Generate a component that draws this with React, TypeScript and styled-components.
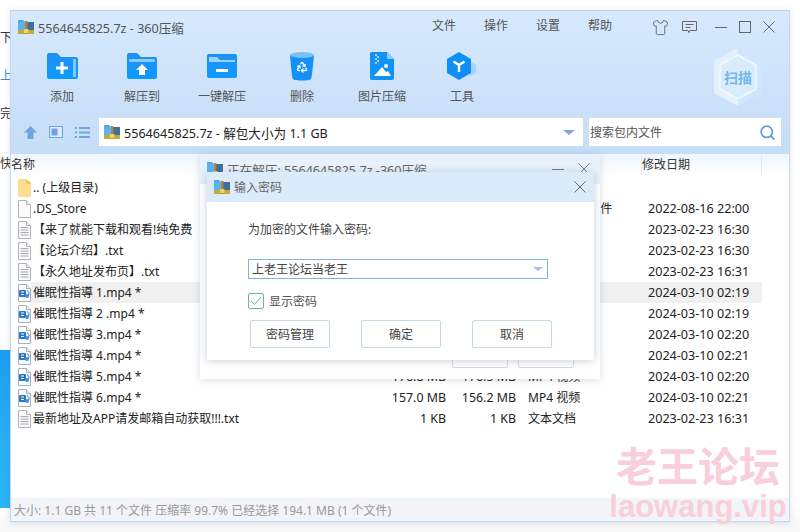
import React from 'react';
import styled, { createGlobalStyle } from 'styled-components';
import { Recycle, Search, Shirt } from 'lucide-react';

const GlobalStyle = createGlobalStyle`
  html, body { margin: 0; padding: 0; background: #fff; }
  body {
    width: 800px;
    height: 532px;
    overflow: hidden;
    font-family: "Noto Sans", "Noto Sans CJK SC", sans-serif;
    font-size: 12px;
    color: #333;
  }
`;

const Desktop = styled.div`
  position: relative;
  box-sizing: border-box;
  width: 800px;
  height: 532px;
  padding: 10px 10px 10px 10px;
  background: linear-gradient(#fff 0, #fff 505px, #f8f8f8 522px);
  overflow: hidden;
`;

// pieces of the page behind the window
const BackText = styled.span<{ $top: number; $blue?: boolean }>`
  position: absolute;
  left: 0;
  top: ${(p) => p.$top}px;
  font-size: 12px;
  line-height: 16px;
  color: ${(p) => (p.$blue ? '#2f8fe8' : '#333')};
`;

const BackAd = styled.div`
  position: absolute;
  left: 0;
  top: 350px;
  width: 10px;
  height: 158px;
  background: linear-gradient(#1b9cf0, #2ab0f6 60%, #28b4f8);
`;

const Window = styled.div`
  position: relative;
  box-sizing: border-box;
  width: 780px;
  height: 512px;
  display: flex;
  flex-direction: column;
  background: #fff;
  border: 1px solid #c3d9f1;
  border-top-color: #bcd5f0;
  box-shadow: 0 1px 6px rgba(90, 110, 140, 0.18);
`;

const Header = styled.div`
  height: 143px;
  flex: none;
  display: flex;
  flex-direction: column;
  background: linear-gradient(#d6e9fd, #c6ddf7);
`;

const TitleBar = styled.div`
  height: 32px;
  flex: none;
  display: flex;
  align-items: center;
  padding: 0 8px 0 7px;
`;

const TitleText = styled.span`
  margin-left: 4px;
  font-size: 12.6px;
  color: #555;
`;

const MenuGroup = styled.div`
  margin-left: auto;
  display: flex;
  gap: 28px;
  margin-right: 34px;
`;

const MenuItem = styled.span`
  font-size: 12px;
  color: #555;
  margin-top: -4px;
`;

const WinControls = styled.div`
  display: flex;
  align-items: center;
  color: #666;
`;

const ControlBox = styled.span<{ $width: number }>`
  width: ${(p) => p.$width}px;
  display: flex;
  justify-content: center;
  align-items: center;
`;

const Toolbar = styled.div`
  height: 75px;
  flex: none;
  display: flex;
  padding-left: 11px;
  position: relative;
`;

const ToolItem = styled.div`
  width: 80px;
  display: flex;
  flex-direction: column;
  align-items: center;
`;

const ToolIcon = styled.div`
  height: 30px;
  margin-top: 8px;
  display: flex;
  align-items: center;
  justify-content: center;
`;

const ToolLabel = styled.span`
  margin-top: 8px;
  font-size: 12px;
  line-height: 16px;
  color: #555;
`;

const ScanBadge = styled.div`
  margin: 5px 27px 0 auto;
  width: 48px;
  height: 58px;
  display: grid;
  place-items: center;
  & > * { grid-area: 1 / 1; }
`;

const ScanText = styled.span`
  font-size: 14px;
  font-weight: 700;
  color: #74b6ee;
`;

const AddressRow = styled.div`
  height: 28px;
  flex: none;
  display: flex;
  align-items: center;
  padding-left: 13px;
`;

const NavIcons = styled.div`
  width: 75px;
  display: flex;
  align-items: center;
  gap: 12px;
`;

const AddressBox = styled.div`
  width: 484px;
  height: 28px;
  display: flex;
  align-items: center;
  padding: 0 8px 0 5px;
  box-sizing: border-box;
  background: #fff;
`;

const AddressText = styled.span`
  margin-left: 4px;
  font-size: 12.6px;
  color: #222;
`;

const DropArrow = styled.span<{ $size: number; $color: string }>`
  margin-left: auto;
  width: 0;
  height: 0;
  border-left: ${(p) => p.$size}px solid transparent;
  border-right: ${(p) => p.$size}px solid transparent;
  border-top: ${(p) => p.$size - 1}px solid ${(p) => p.$color};
`;

const SearchBox = styled.div`
  margin-left: 6px;
  width: 192px;
  height: 28px;
  display: flex;
  align-items: center;
  justify-content: space-between;
  padding: 0 5px 0 1px;
  box-sizing: border-box;
  background: #fff;
  color: #555;
`;

const ListHeader = styled.div`
  height: 21px;
  flex: none;
  display: flex;
  align-items: center;
  background: linear-gradient(#eef5fd, #fff);
`;

const HeaderCell = styled.span<{ $width: number; $divider?: boolean }>`
  width: ${(p) => p.$width}px;
  box-sizing: border-box;
  height: 21px;
  line-height: 21px;
  font-size: 12px;
  color: #333;
  border-right: ${(p) => (p.$divider ? '1px solid #e3e9f1' : 'none')};
`;

const ListBody = styled.div`
  flex: 1;
  padding-top: 2px;
`;

const Row = styled.div`
  height: 21px;
  display: flex;
  align-items: center;
  padding-left: 6px;
`;

const RowIconBox = styled.span`
  width: 14px;
  flex: none;
  display: flex;
  justify-content: center;
`;

const RowBody = styled.div<{ $selected?: boolean }>`
  flex: none;
  width: 731px;
  height: 21px;
  display: grid;
  grid-template-columns: 355px 60px 70px 126px 120px;
  align-items: center;
  line-height: 21px;
  padding-left: 0;
  background: ${(p) => (p.$selected ? '#f0f0f0' : 'transparent')};
  color: #222;
`;

const NameCell = styled.span`
  padding-left: 2px;
  white-space: nowrap;
  overflow: hidden;
  font-size: 12px;
`;

const SizeCell = styled.span`
  text-align: right;
  font-size: 12.4px;
`;

const TypeCell = styled.span`
  padding-left: 12px;
  font-size: 12px;
  white-space: nowrap;
`;

const DateCell = styled.span`
  padding-left: 6px;
  font-size: 12.6px;
  white-space: nowrap;
`;

const StatusBar = styled.div`
  height: 23px;
  flex: none;
  display: flex;
  align-items: center;
  padding-left: 3px;
  background: #f2f4f7;
  font-size: 12px;
  color: #9a9a9a;
`;

// dialog behind the password prompt
const ProgressDialog = styled.div`
  position: absolute;
  left: 200px;
  top: 154px;
  width: 400px;
  height: 225px;
  display: flex;
  flex-direction: column;
  background: #fff;
  box-shadow: 0 1px 8px rgba(80, 100, 130, 0.22);
`;

const ProgressHead = styled.div`
  height: 30px;
  flex: none;
  display: flex;
  align-items: center;
  padding: 0 10px 0 7px;
  background: #e8f2fc;
  color: #666;
`;

const ProgressTitle = styled.span`
  margin-left: 4px;
  font-size: 12.6px;
`;

const ProgressControls = styled.div`
  margin-left: auto;
  display: flex;
  gap: 14px;
  align-items: center;
`;

const ProgressFoot = styled.div`
  margin-top: auto;
  margin-bottom: 11px;
  padding-left: 252px;
  display: flex;
  gap: 10px;
`;

const GhostButton = styled.div`
  width: 56px;
  height: 26px;
  box-sizing: border-box;
  border: 1px solid #d4dde6;
  border-radius: 2px;
  background: #fff;
`;

const PasswordDialog = styled.div`
  position: absolute;
  left: 207px;
  top: 172px;
  width: 387px;
  height: 188px;
  display: flex;
  flex-direction: column;
  background: #fff;
  box-shadow: 0 1px 8px rgba(80, 100, 130, 0.3);
`;

const DialogHead = styled.div`
  height: 30px;
  flex: none;
  display: flex;
  align-items: center;
  justify-content: space-between;
  padding: 0 8px 0 7px;
  background: #dcebfa;
  color: #666;
`;

const DialogTitle = styled.span`
  display: flex;
  align-items: center;
  gap: 4px;
  font-size: 12px;
  color: #666;
`;

const DialogBody = styled.div`
  display: flex;
  flex-direction: column;
  padding: 20px 0 0 41px;
`;

const PromptLabel = styled.span`
  font-size: 12px;
  line-height: 16px;
  color: #444;
`;

const Combo = styled.div`
  margin-top: 21px;
  box-sizing: border-box;
  width: 300px;
  height: 20px;
  display: flex;
  align-items: center;
  padding: 0 4px 0 3px;
  border: 1px solid #82b3d9;
  font-size: 12px;
  color: #444;
`;

const CheckRow = styled.div`
  margin-top: 13px;
  display: flex;
  align-items: center;
  gap: 5px;
  color: #555;
`;

const CheckBox = styled.span`
  width: 16px;
  height: 16px;
  box-sizing: border-box;
  display: flex;
  align-items: center;
  justify-content: center;
  border: 1px solid #5dbd8f;
  border-radius: 2px;
`;

const ButtonRow = styled.div`
  margin: 10px 0 0 2px;
  display: flex;
  gap: 31px;
`;

const DialogButton = styled.div`
  box-sizing: border-box;
  width: 80px;
  height: 28px;
  display: flex;
  align-items: center;
  justify-content: center;
  border: 1px solid #c4d7e6;
  border-radius: 2px;
  font-size: 12px;
  color: #444;
  background: #fff;
`;

const Watermark = styled.div`
  position: absolute;
  left: 613px;
  top: 441px;
  width: 170px;
  display: flex;
  flex-direction: column;
  align-items: center;
  pointer-events: none;
  color: #f9cfd9;
  font-weight: 700;
`;

const WatermarkCn = styled.span`
  font-size: 41px;
  line-height: 50px;
  letter-spacing: 0;
  white-space: nowrap;
`;

const WatermarkEn = styled.span`
  font-size: 31px;
  line-height: 32px;
  font-family: "Liberation Sans", sans-serif;
  white-space: nowrap;
`;

const ArchiveIcon = () => (
  <svg width="16" height="14" viewBox="0 0 16 14">
    <path d="M0 1a1 1 0 0 1 1-1h4l2 2v8H0z" fill="#4ea6e8" />
    <rect x="0" y="2" width="8" height="8" fill="#5cb2ee" />
    <rect x="9" y="2" width="7" height="8" fill="#3f6f9f" />
    <rect x="0" y="10" width="16" height="4" fill="#c2ac3a" />
    <rect x="7" y="1" width="2.4" height="13" fill="#b9852c" />
    <rect x="6" y="9" width="4.4" height="4" fill="#f1cf6a" />
  </svg>
);

const AddIcon = () => (
  <svg width="31" height="26" viewBox="0 0 31 26">
    <defs>
      <linearGradient id="fold" x1="0" y1="0" x2="0" y2="1">
        <stop offset="0" stopColor="#1f8ff6" />
        <stop offset="1" stopColor="#0d9bff" />
      </linearGradient>
    </defs>
    <path d="M2 0h8l4 4h15a2 2 0 0 1 2 2v18a2 2 0 0 1-2 2H2a2 2 0 0 1-2-2V2a2 2 0 0 1 2-2z" fill="url(#fold)" />
    <rect x="26" y="6" width="3" height="18" fill="#85c6fb" />
    <rect x="9" y="13.5" width="12" height="3" fill="#fff" />
    <rect x="13.5" y="9" width="3" height="12" fill="#fff" />
  </svg>
);

const ExtractToIcon = () => (
  <svg width="30" height="26" viewBox="0 0 30 26">
    <path d="M2 0h8l4 4h14a2 2 0 0 1 2 2v18a2 2 0 0 1-2 2H2a2 2 0 0 1-2-2V2a2 2 0 0 1 2-2z" fill="url(#fold)" />
    <rect x="2" y="6" width="26" height="3" rx="1" fill="#8accfd" />
    <path d="M15 11l6 6h-3v5h-6v-5H9z" fill="#fff" />
  </svg>
);

const OneKeyIcon = () => (
  <svg width="30" height="24" viewBox="0 0 30 24">
    <path d="M2 0h26a2 2 0 0 1 2 2v20a2 2 0 0 1-2 2H2a2 2 0 0 1-2-2V2a2 2 0 0 1 2-2z" fill="url(#fold)" />
    <path d="M2 3h8l3 3h15v2H2z" fill="#9ad4fe" />
    <rect x="9" y="15" width="12" height="3" fill="#fff" />
  </svg>
);

const TrashIcon = () => (
  <svg width="24" height="29" viewBox="0 0 24 29">
    <path d="M0 3c0 0 2 24 3 24 1.500 2 16.500 2 18 0 1 0 3-24 3-24z" fill="#1491f7" />
    <ellipse cx="12" cy="3" rx="12" ry="3" fill="#7dc0f8" />
    <Recycle x={6} y={9} width={12} height={12} color="#fff" strokeWidth={2.6} />
  </svg>
);

const ImagePackIcon = () => (
  <svg width="24" height="28" viewBox="0 0 24 28">
    <path d="M2 0h15l7 7v19a2 2 0 0 1-2 2H2a2 2 0 0 1-2-2V2a2 2 0 0 1 2-2z" fill="#1192f6" />
    <path d="M17 0l7 7h-7z" fill="#8ccafb" />
    <g fill="#9bd2fc">
      <rect x="5" y="2" width="2" height="2" />
      <rect x="7" y="4" width="2" height="2" />
      <rect x="5" y="6" width="2" height="2" />
      <rect x="7" y="8" width="2" height="2" />
      <rect x="5" y="10" width="2" height="2" />
    </g>
    <circle cx="16" cy="14" r="2" fill="#fff" />
    <path d="M4 24l8-9 4 5 2-1 3 5z" fill="#fff" />
  </svg>
);

const ToolsIcon = () => (
  <svg width="30" height="28" viewBox="0 0 30 28">
    <path d="M20 13l5-2.500 4 2.500v8l-5 3-4-3z" fill="#a5d3fb" />
    <path d="M12 0l12 7v14l-12 7-12-7V7z" fill="#0d8ff6" />
    <path d="M6.500 9.500L12 13l5.500-3.500M12 13v7" stroke="#fff" strokeWidth="2.4" fill="none" />
  </svg>
);

const ScanHex = () => (
  <svg width="48" height="58" viewBox="0 0 48 58">
    <path d="M24 0l24 13v32L24 58 0 45V13z" fill="#cfe6fb" />
    <path d="M24 0v58L0 45V13z" fill="#e3f1fd" />
    <path d="M24 7l18 10v24L24 51 6 41V17z" fill="#d9ecfc" stroke="#f2f9ff" strokeWidth="1.500" />
  </svg>
);

const FeedbackIcon = () => (
  <svg width="15" height="13" viewBox="0 0 15 13" fill="none" stroke="#666">
    <path d="M.5.5h14v9H8l-1 2-1-2H.5z" />
    <path d="M3.500 3.500h8M3.500 6.500h5" />
  </svg>
);

const MinIcon = ({ color = '#666' }: { color?: string }) => (
  <svg width="12" height="12" viewBox="0 0 12 12">
    <path d="M0 6.500h12" stroke={color} />
  </svg>
);

const MaxIcon = () => (
  <svg width="12" height="12" viewBox="0 0 12 12" fill="none">
    <rect x=".5" y=".5" width="11" height="11" stroke="#666" />
  </svg>
);

const CloseIcon = ({ color = '#666' }: { color?: string }) => (
  <svg width="12" height="12" viewBox="0 0 12 12">
    <path d="M.5.500l11 11M11.500.500l-11 11" stroke={color} />
  </svg>
);

const UpIcon = () => (
  <svg width="13" height="13" viewBox="0 0 13 13">
    <path d="M6.500 0L13 6.500H9.500V13h-6V6.500H0z" fill="#6ea4e2" />
  </svg>
);

const PaneIcon = () => (
  <svg width="14" height="12" viewBox="0 0 14 12">
    <rect x=".5" y=".5" width="13" height="11" fill="#dceafa" stroke="#6ea4e2" />
    <rect x="2.500" y="2.500" width="6" height="7" fill="#6ea4e2" />
  </svg>
);

const ListIcon = () => (
  <svg width="15" height="11" viewBox="0 0 15 11" fill="#6ea4e2">
    <rect x="0" y="0" width="2" height="2" />
    <rect x="4" y="0" width="11" height="2" />
    <rect x="0" y="4.500" width="2" height="2" />
    <rect x="4" y="4.500" width="11" height="2" />
    <rect x="0" y="9" width="2" height="2" />
    <rect x="4" y="9" width="11" height="2" />
  </svg>
);

const FolderFile = () => (
  <svg width="13" height="18" viewBox="0 0 13 18">
    <path d="M0 1a1 1 0 0 1 1-1h7l5 4v13a1 1 0 0 1-1 1H1a1 1 0 0 1-1-1z" fill="#fbdf8f" />
    <path d="M8 0l5 4v1H8z" fill="#f2c661" />
  </svg>
);

const BlankFile = ({ lines }: { lines?: boolean }) => (
  <svg width="13" height="18" viewBox="0 0 13 18">
    <path d="M.5.500h8l4 4v13h-12z" fill="#fafafa" stroke="#b0b4b8" />
    <path d="M8.500.500v4h4" fill="#eee" stroke="#b0b4b8" />
    {lines && <path d="M2.500 6.500h8M2.500 9h8M2.500 11.500h8M2.500 14h8" stroke="#a5a8ac" />}
  </svg>
);

const VideoFile = () => (
  <svg width="13" height="18" viewBox="0 0 13 18">
    <path d="M.5.500h8l4 4v13h-12z" fill="#f8fafc" stroke="#a9b2ba" />
    <path d="M8.500.500v4h4" fill="#e8eef4" stroke="#a9b2ba" />
    <rect x="1" y="6" width="7" height="7" rx="1" fill="#2a77c9" />
    <circle cx="9" cy="12" r="2" fill="#3f96e0" />
    <path d="M9 6.500c2 1 2.500 3 1.500 5" stroke="#2a77c9" fill="none" />
    <path d="M3 8h3M3 10.500h3" stroke="#fff" />
  </svg>
);

type FileKind = 'folder' | 'blank' | 'text' | 'video';

interface FileRow {
  kind: FileKind;
  name: string;
  size?: string;
  packed?: string;
  type?: string;
  date?: string;
  selected?: boolean;
}

const files: FileRow[] = [
  { kind: 'folder', name: '.. (上级目录)' },
  { kind: 'blank', name: '.DS_Store', type: 'DS_STORE 文件', date: '2022-08-16 22:00' },
  { kind: 'text', name: '【来了就能下载和观看!纯免费', date: '2023-02-23 16:30' },
  { kind: 'text', name: '【论坛介绍】.txt', date: '2023-02-23 16:30' },
  { kind: 'text', name: '【永久地址发布页】.txt', date: '2023-02-23 16:31' },
  { kind: 'video', name: '催眠性指導 1.mp4 *', date: '2024-03-10 02:19', selected: true },
  { kind: 'video', name: '催眠性指導 2 .mp4 *', date: '2024-03-10 02:19' },
  { kind: 'video', name: '催眠性指導 3.mp4 *', date: '2024-03-10 02:20' },
  { kind: 'video', name: '催眠性指導 4.mp4 *', date: '2024-03-10 02:21' },
  { kind: 'video', name: '催眠性指導 5.mp4 *', size: '176.8 MB', packed: '176.5 MB', type: 'MP4 视频', date: '2024-03-10 02:20' },
  { kind: 'video', name: '催眠性指導 6.mp4 *', size: '157.0 MB', packed: '156.2 MB', type: 'MP4 视频', date: '2024-03-10 02:21' },
  { kind: 'text', name: '最新地址及APP请发邮箱自动获取!!!.txt', size: '1 KB', packed: '1 KB', type: '文本文档', date: '2023-02-23 16:31' },
];

const kindIcons: Record<FileKind, React.JSX.Element> = {
  folder: <FolderFile />,
  blank: <BlankFile />,
  text: <BlankFile lines />,
  video: <VideoFile />,
};

const tools = [
  { label: '添加', icon: <AddIcon /> },
  { label: '解压到', icon: <ExtractToIcon /> },
  { label: '一键解压', icon: <OneKeyIcon /> },
  { label: '删除', icon: <TrashIcon /> },
  { label: '图片压缩', icon: <ImagePackIcon /> },
  { label: '工具', icon: <ToolsIcon /> },
];

const App = () => {
  return (
    <Desktop>
      <GlobalStyle />
      <BackText $top={30}>下</BackText>
      <BackText $top={68} $blue>上</BackText>
      <BackText $top={106}>完</BackText>
      <BackText $top={156}>快</BackText>
      <BackAd />

      <Window>
        <Header>
          <TitleBar>
            <ArchiveIcon />
            <TitleText>5564645825.7z - 360压缩</TitleText>
            <MenuGroup>
              <MenuItem>文件</MenuItem>
              <MenuItem>操作</MenuItem>
              <MenuItem>设置</MenuItem>
              <MenuItem>帮助</MenuItem>
            </MenuGroup>
            <WinControls>
              <ControlBox $width={29}>
                <Shirt size={17} strokeWidth={1.3} />
              </ControlBox>
              <ControlBox $width={29}>
                <FeedbackIcon />
              </ControlBox>
              <ControlBox $width={24} style={{ marginLeft: 5 }}>
                <MinIcon />
              </ControlBox>
              <ControlBox $width={24}>
                <MaxIcon />
              </ControlBox>
              <ControlBox $width={24}>
                <CloseIcon />
              </ControlBox>
            </WinControls>
          </TitleBar>
          <Toolbar>
            {tools.map((tool) => (
              <ToolItem key={tool.label}>
                <ToolIcon>{tool.icon}</ToolIcon>
                <ToolLabel>{tool.label}</ToolLabel>
              </ToolItem>
            ))}
            <ScanBadge>
              <ScanHex />
              <ScanText>扫描</ScanText>
            </ScanBadge>
          </Toolbar>
          <AddressRow>
            <NavIcons>
              <UpIcon />
              <PaneIcon />
              <ListIcon />
            </NavIcons>
            <AddressBox>
              <ArchiveIcon />
              <AddressText>5564645825.7z - 解包大小为 1.1 GB</AddressText>
              <DropArrow $size={6} $color="#7fa6dc" />
            </AddressBox>
            <SearchBox>
              搜索包内文件
              <Search size={17} color="#5f9bd6" strokeWidth={2.4} />
            </SearchBox>
          </AddressRow>
        </Header>

        <ListHeader>
          <HeaderCell $width={631} $divider>名称</HeaderCell>
          <HeaderCell $width={120} $divider>修改日期</HeaderCell>
        </ListHeader>

        <ListBody>
          {files.map((file) => (
            <Row key={file.name}>
              <RowIconBox>{kindIcons[file.kind]}</RowIconBox>
              <RowBody $selected={file.selected}>
                <NameCell>{file.name}</NameCell>
                <SizeCell>{file.size}</SizeCell>
                <SizeCell>{file.packed}</SizeCell>
                <TypeCell>{file.type}</TypeCell>
                <DateCell>{file.date}</DateCell>
              </RowBody>
            </Row>
          ))}
        </ListBody>

        <StatusBar>大小: 1.1 GB 共 11 个文件 压缩率 99.7% 已经选择 194.1 MB (1 个文件)</StatusBar>
      </Window>

      <ProgressDialog>
        <ProgressHead>
          <ArchiveIcon />
          <ProgressTitle>正在解压: 5564645825.7z -360压缩</ProgressTitle>
          <ProgressControls>
            <MinIcon color="#777" />
            <CloseIcon color="#777" />
          </ProgressControls>
        </ProgressHead>
        <ProgressFoot>
          <GhostButton />
          <GhostButton />
        </ProgressFoot>
      </ProgressDialog>

      <PasswordDialog>
        <DialogHead>
          <DialogTitle>
            <ArchiveIcon />
            输入密码
          </DialogTitle>
          <CloseIcon />
        </DialogHead>
        <DialogBody>
          <PromptLabel>为加密的文件输入密码:</PromptLabel>
          <Combo>
            上老王论坛当老王
            <DropArrow $size={5} $color="#a9bfe2" />
          </Combo>
          <CheckRow>
            <CheckBox>
              <svg width="12" height="10" viewBox="0 0 12 10" fill="none">
                <path d="M1 5l3.500 3.500L11 1" stroke="#5dbd8f" />
              </svg>
            </CheckBox>
            显示密码
          </CheckRow>
          <ButtonRow>
            <DialogButton>密码管理</DialogButton>
            <DialogButton>确定</DialogButton>
            <DialogButton>取消</DialogButton>
          </ButtonRow>
        </DialogBody>
      </PasswordDialog>

      <Watermark>
        <WatermarkCn>老王论坛</WatermarkCn>
        <WatermarkEn>laowang.vip</WatermarkEn>
      </Watermark>
    </Desktop>
  );
};

export default App;
